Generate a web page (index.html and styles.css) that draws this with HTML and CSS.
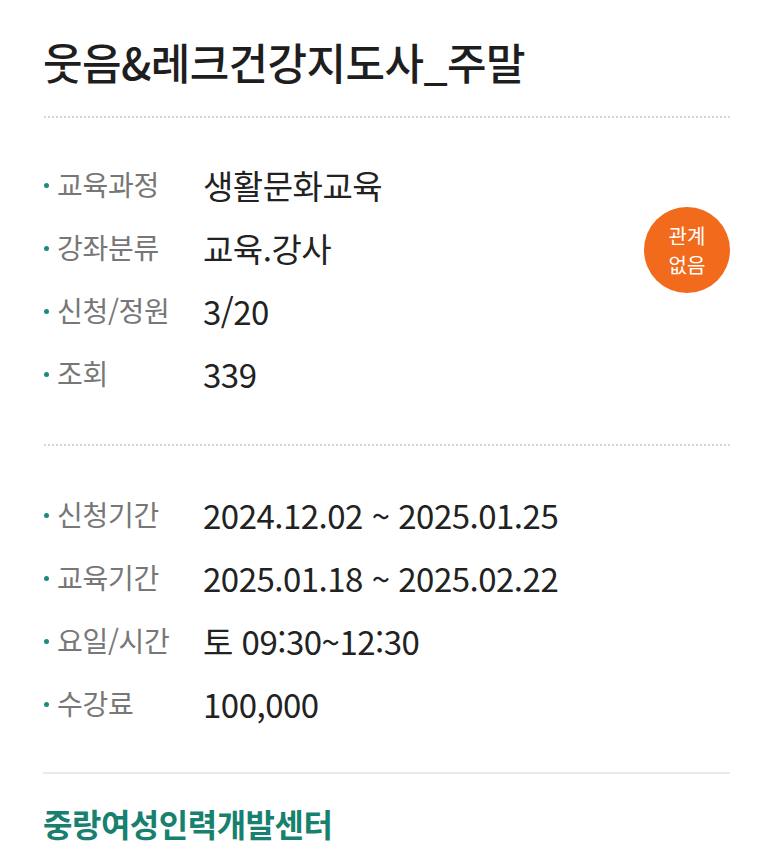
FILE: index.html
```html
<!DOCTYPE html>
<html lang="ko">
<head>
<meta charset="utf-8">
<link rel="stylesheet" href="styles.css">
</head>
<body>
<div class="page">
  <h1 class="title">웃음&amp;레크건강지도사_주말</h1>
  <div class="sep dotted"></div>
  <div class="section first">
    <div class="badge"><span>관계</span><span>없음</span></div>
    <div class="row"><span class="label">교육과정</span><span class="value">생활문화교육</span></div>
    <div class="row"><span class="label">강좌분류</span><span class="value">교육.강사</span></div>
    <div class="row"><span class="label">신청/정원</span><span class="value">3/20</span></div>
    <div class="row"><span class="label">조회</span><span class="value">339</span></div>
  </div>
  <div class="sep dotted"></div>
  <div class="section second">
    <div class="row"><span class="label">신청기간</span><span class="value">2024.12.02 ~ 2025.01.25</span></div>
    <div class="row"><span class="label">교육기간</span><span class="value">2025.01.18 ~ 2025.02.22</span></div>
    <div class="row"><span class="label">요일/시간</span><span class="value">토 09:30~12:30</span></div>
    <div class="row"><span class="label">수강료</span><span class="value">100,000</span></div>
  </div>
  <div class="sep solid"></div>
  <div class="org">중랑여성인력개발센터</div>
</div>
</body>
</html>
```

FILE: styles.css
```css
html, body {
  margin: 0;
  padding: 0;
  background: #ffffff;
}
body {
  font-family: "Noto Sans CJK KR", "Noto Sans", sans-serif;
  color: #222222;
}
.page {
  padding: 0 43px;
  width: 687px;
}
.title {
  margin: 0;
  padding-top: 30px;
  height: 116px;
  box-sizing: border-box;
  font-size: 43px;
  font-weight: 500;
  line-height: 62px;
  letter-spacing: -0.6px;
  color: #1e1e1e;
}
.sep {
  height: 2px;
}
.sep.dotted {
  background-image: radial-gradient(circle, #d6d6d6 0.9px, transparent 1.1px);
  background-size: 4px 2px;
  background-repeat: repeat-x;
}
.sep.solid {
  height: 2px;
  background: #eaeaea;
}
.section {
  position: relative;
  display: flex;
  flex-direction: column;
}
.section.first {
  padding: 36px 0 38px;
}
.section.second {
  padding: 38px 0 36px;
}
.row {
  display: flex;
  align-items: center;
  height: 63px;
}
.label {
  position: relative;
  width: 160px;
  flex: none;
  box-sizing: border-box;
  padding-left: 14px;
  font-size: 28px;
  color: #777777;
  line-height: 1;
  letter-spacing: -0.3px;
  margin-top: -4px;
}
.label::before {
  content: "";
  position: absolute;
  left: 1px;
  top: 50%;
  width: 5px;
  height: 5px;
  margin-top: -1px;
  border-radius: 50%;
  background: #1c8a7c;
}
.value {
  font-size: 33px;
  line-height: 1;
  color: #222222;
  letter-spacing: -0.5px;
}
.badge {
  position: absolute;
  right: 0;
  top: 89px;
  width: 86px;
  height: 86px;
  border-radius: 50%;
  background: #f26a1b;
  color: #ffffff;
  font-size: 20px;
  line-height: 29px;
  display: flex;
  flex-direction: column;
  align-items: center;
  justify-content: center;
  text-align: center;
}
.org {
  padding-top: 25px;
  font-size: 32px;
  font-weight: 700;
  color: #17806e;
  line-height: 48px;
  letter-spacing: -0.5px;
}
```
